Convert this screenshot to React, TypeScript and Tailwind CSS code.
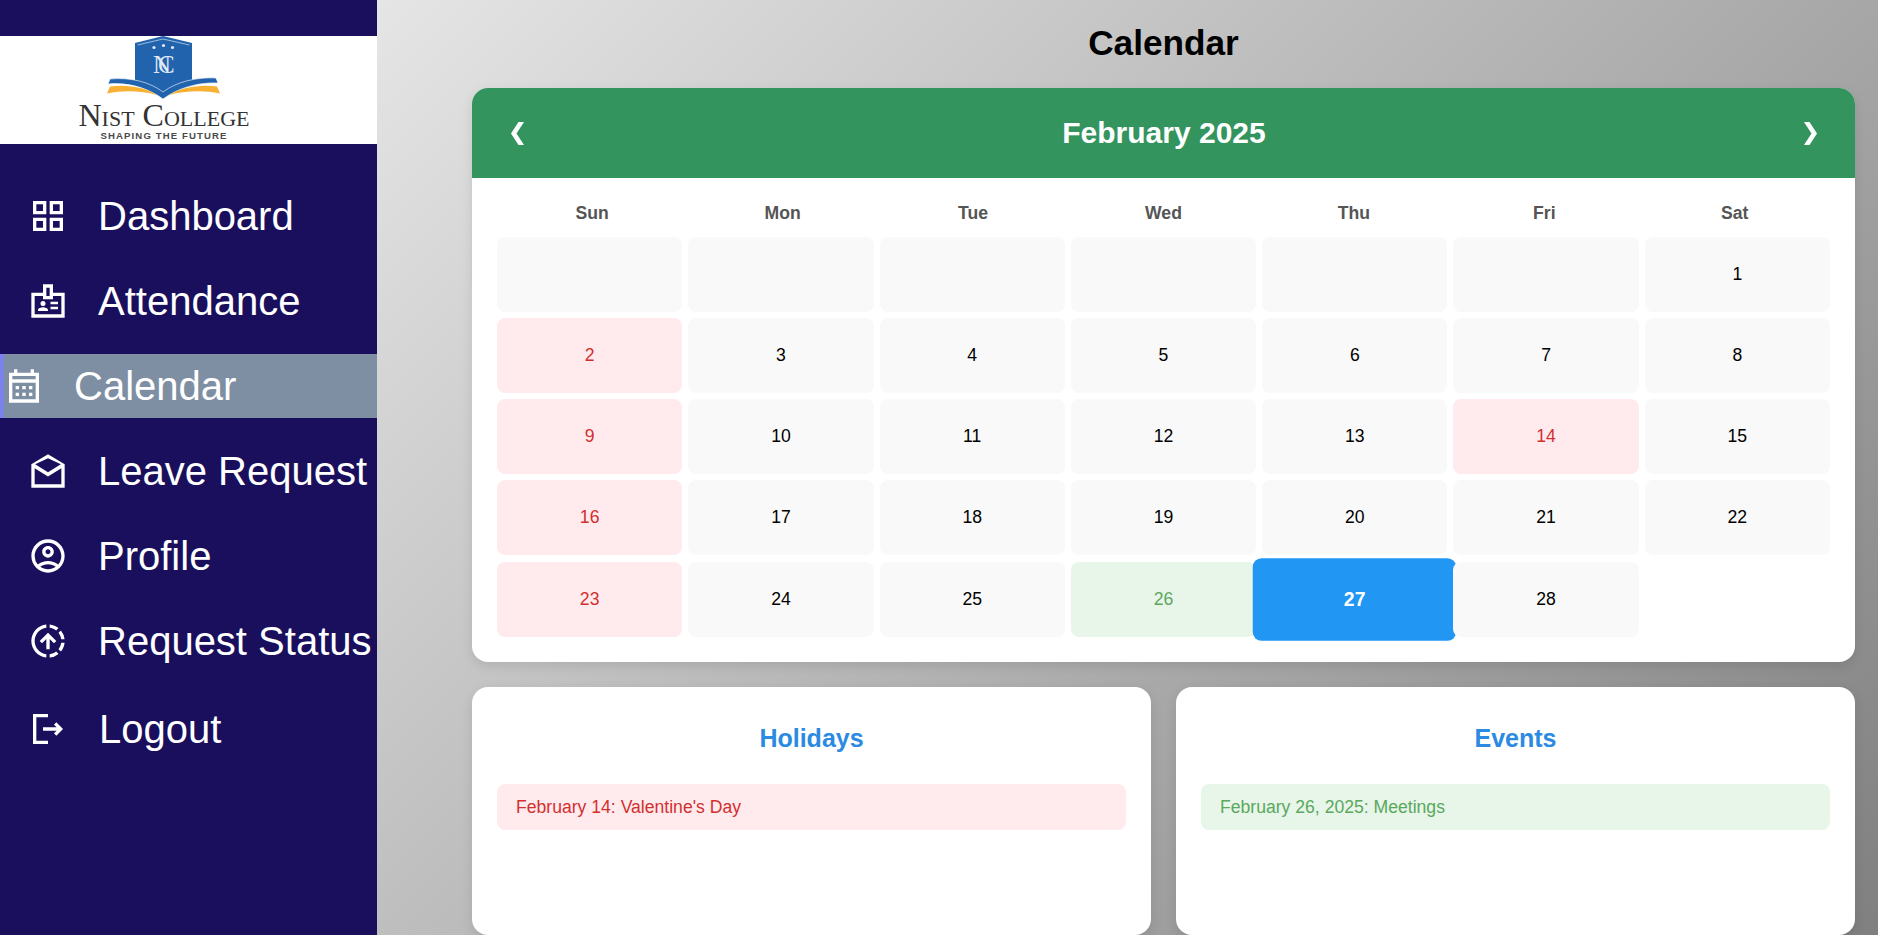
import React from 'react';
import { MdOutlineAccountCircle, MdOutlineDownloading } from 'react-icons/md';

const Icon: React.FC<{ d: string }> = ({ d }) => (
  <svg width="40" height="40" viewBox="0 0 24 24" fill="currentColor" className="shrink-0">
    <path d={d} />
  </svg>
);

const gridPath =
  'M3 3v8h8V3H3zm6 6H5V5h4v4zm-6 4v8h8v-8H3zm6 6H5v-4h4v4zm4-16v8h8V3h-8zm6 6h-4V5h4v4zm-6 4v8h8v-8h-8zm6 6h-4v-4h4v4z';
const badgePath =
  'M22 7h-7V2H9v5H2v15h20V7zM11 4h2v5h-2V4zm9 16H4V9h5v2h6V9h5v11zM9 12a1.5 1.5 0 1 1 0 3 1.5 1.5 0 0 1 0-3zM6 18v-.7c0-1 2-1.6 3-1.6s3 .6 3 1.6v.7H6zM13.500 12.500H18V14h-4.500zM13.500 15.500H18V17h-4.500z';
const calendarPath =
  'M21 4h-3V2h-2v2H8V2H6v2H3v18h18V4zm-2 16H5V10h14v10zM5 8V6h14v2H5zM7 12h2v2H7zM11 12h2v2h-2zM15 12h2v2h-2zM7 16h2v2H7zM11 16h2v2h-2zM15 16h2v2h-2z';
const draftsPath =
  'M22 8 12 2 2 8v14h20V8zm-2.300 0L12 12.800 4.300 8 12 4.300 19.700 8zM4 20v-9.700l8 5 8-5V20H4z';
const logoutPath = 'M17 8l-1.410 1.410L17.170 11H9v2h8.170l-1.580 1.580L17 16l4-4-4-4zM5 5h7V3H3v18h9v-2H5V5z';

const navItems = [
  { label: 'Dashboard', icon: <Icon d={gridPath} /> },
  { label: 'Attendance', icon: <Icon d={badgePath} /> },
  { label: 'Calendar', icon: <Icon d={calendarPath} />, active: true },
  { label: 'Leave Request', icon: <Icon d={draftsPath} /> },
  { label: 'Profile', icon: <MdOutlineAccountCircle size={40} className="shrink-0" /> },
  { label: 'Request Status', icon: <MdOutlineDownloading size={40} className="shrink-0 -scale-y-100" /> },
];

const weekDays = ['Sun', 'Mon', 'Tue', 'Wed', 'Thu', 'Fri', 'Sat'];

const holidays = [2, 9, 14, 16, 23];

const Logo: React.FC = () => (
  <div className="relative h-[108px] bg-white overflow-hidden">
    <svg width="377" height="108" viewBox="0 0 377 108" className="block">
      <path d="M135 7 L163 0 L192 7 L192 46 L163 60 L135 46 Z" fill="#2263ae" />
      <path d="M137.500 9 L163 3 L189.500 9" fill="none" stroke="#ffffff" strokeWidth="0.8" opacity="0.7" />
      <circle cx="154" cy="11.500" r="1.600" fill="#dfe8f4" />
      <circle cx="163.500" cy="9.500" r="1.600" fill="#dfe8f4" />
      <circle cx="172.500" cy="11.500" r="1.600" fill="#dfe8f4" />
      <text x="153" y="37" fontFamily="Liberation Serif" fontSize="25" letterSpacing="-13" fill="#dfe8f4">
        NC
      </text>
      <path d="M110 43 C130 41 150 46 163 56 C176 46 196 41 216 42 L218 47 C198 46 178 52 163 63 C148 52 128 46 108 48 Z" fill="#2263ae" stroke="#ffffff" strokeWidth="0.6" />
      <path d="M110 50.500 C128 48 147 52 157 59 C142 55 124 54 107 57.500 Z" fill="#f8b133" />
      <path d="M217 50.500 C199 48 180 52 169 59 C184 55 203 54 220 57.500 Z" fill="#f8b133" />
    </svg>
    <div className="absolute left-[64px] top-[65px] w-[200px] text-center text-[#333333] whitespace-nowrap font-['Liberation_Serif',serif] text-[32px] leading-[29px] [font-variant:small-caps]">
      Nist College
    </div>
    <div className="absolute left-[64px] top-[95px] w-[200px] text-center text-[#4a4a4a] whitespace-nowrap font-['Liberation_Sans',sans-serif] font-bold text-[9.6px] leading-[10px] tracking-[1.100px]">
      SHAPING THE FUTURE
    </div>
  </div>
);

const Sidebar: React.FC = () => (
  <aside className="w-[377px] h-full shrink-0 bg-[#1a0f5c] pt-9 text-white">
    <Logo />
    <ul className="mt-10 flex flex-col gap-[21px]">
      {navItems.map((item) => (
        <li
          key={item.label}
          className={
            item.active
              ? 'flex items-center h-16 gap-[30px] border-l-4 border-[#7b83eb] bg-[#7f8fa3]'
              : 'flex items-center h-16 gap-[30px] pl-7'
          }
        >
          {item.icon}
          <span className="text-[40px] leading-none whitespace-nowrap">{item.label}</span>
        </li>
      ))}
      <li className="flex items-center h-16 gap-[31px] pl-7 mt-[3px]">
        <Icon d={logoutPath} />
        <span className="text-[40px] leading-none whitespace-nowrap">Logout</span>
      </li>
    </ul>
  </aside>
);

const DayCell: React.FC<{ day: number }> = ({ day }) => {
  if (day === 27) {
    return (
      <div className="h-[75px] flex items-center justify-center rounded-lg bg-[#2196f3] text-white font-bold text-[17.6px] scale-110">
        {day}
      </div>
    );
  }
  if (day === 26) {
    return (
      <div className="h-[75px] flex items-center justify-center rounded-lg bg-[#e8f5e9] text-[#5aa85e] text-[17.6px]">
        {day}
      </div>
    );
  }
  if (holidays.includes(day)) {
    return (
      <div className="h-[75px] flex items-center justify-center rounded-lg bg-[#ffebee] text-[#d32f2f] text-[17.6px]">
        {day}
      </div>
    );
  }
  return (
    <div
      className={
        day === 28
          ? 'relative z-10 h-[75px] flex items-center justify-center rounded-lg bg-[#f9f9f9] text-black text-[17.6px]'
          : 'h-[75px] flex items-center justify-center rounded-lg bg-[#f9f9f9] text-black text-[17.6px]'
      }
    >
      {day}
    </div>
  );
};

const InfoCard: React.FC<{ title: string; text: string; itemClass: string }> = ({ title, text, itemClass }) => (
  <div className="flex-1 bg-white rounded-2xl p-[25px] shadow-[0_4px_12px_rgba(0,0,0,0.1)]">
    <h3 className="mt-3 text-center text-[25px] leading-7 font-bold text-[#2b8ae2]">{title}</h3>
    <div className={`mt-8 h-[46px] flex items-center px-[19px] rounded-lg text-[17.6px] ${itemClass}`}>{text}</div>
  </div>
);

const Chevron: React.FC<{ flip?: boolean }> = ({ flip }) => (
  <svg width="13" height="23" viewBox="0 0 13 23" fill="#ffffff" className={flip ? '-scale-x-100' : ''}>
    <polygon points="7.500,0 13,0 5.500,11.500 13,23 7.500,23 0,11.500" />
  </svg>
);

const App: React.FC = () => {
  const days = Array.from({ length: 28 }, (_, i) => i + 1);

  return (
    <div className="h-screen flex overflow-hidden font-['Liberation_Sans',Arial,sans-serif] bg-[linear-gradient(135deg,#f5f5f5,#808080)]">
      <Sidebar />
      <main className="flex-1 min-w-0 pl-[95px] pr-[23px] flex flex-col">
        <h1 className="h-[88px] pt-[22px] text-center text-[35.2px] leading-[42px] font-bold text-black">Calendar</h1>
        <section className="bg-white rounded-2xl overflow-hidden shadow-[0_4px_12px_rgba(0,0,0,0.1)]">
          <div className="h-[90px] pl-[39px] pr-[38px] flex items-center justify-between bg-[#34945e] text-white">
            <Chevron />
            <span className="text-[30px] font-bold -mt-[2px]">February 2025</span>
            <Chevron flip />
          </div>
          <div className="p-[25px]">
            <div className="grid grid-cols-7 mb-[6px] -mt-[4px] pb-[4px]">
              {weekDays.map((d) => (
                <div key={d} className="h-7 flex items-center justify-center text-[17.6px] font-bold text-[#555555]">
                  {d}
                </div>
              ))}
            </div>
            <div className="grid grid-cols-7 grid-rows-[75px_75px_75px_76px_75px] gap-[6px]">
              {Array.from({ length: 6 }, (_, i) => (
                <div key={i} className="h-[75px] rounded-lg bg-[#f9f9f9]" />
              ))}
              {days.map((d) => (
                <DayCell key={d} day={d} />
              ))}
            </div>
          </div>
        </section>
        <div className="mt-[25px] flex-1 flex gap-[25px]">
          <InfoCard title="Holidays" text="February 14: Valentine's Day" itemClass="bg-[#ffebee] text-[#d32f2f]" />
          <InfoCard title="Events" text="February 26, 2025: Meetings" itemClass="bg-[#e8f5e9] text-[#5aa85e]" />
        </div>
      </main>
    </div>
  );
};

export default App;
